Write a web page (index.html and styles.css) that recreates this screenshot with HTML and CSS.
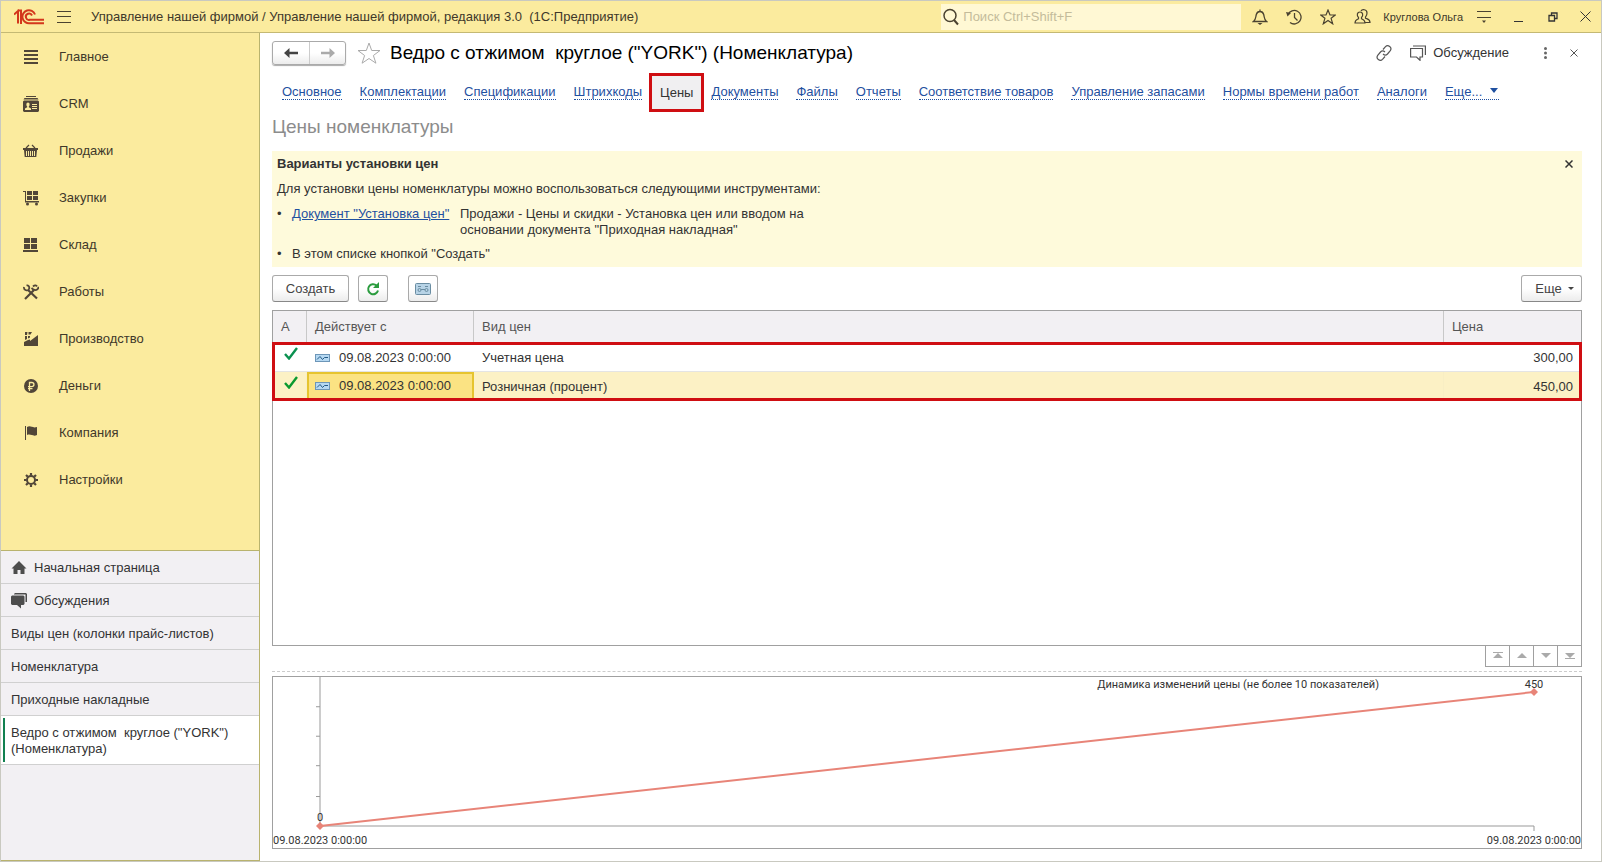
FILE: index.html
```html
<!DOCTYPE html>
<html lang="ru">
<head>
    <meta charset="UTF-8">
    <meta name="viewport" content="width=device-width, initial-scale=1.0">
    <title>Управление нашей фирмой</title>
    <link rel="stylesheet" href="styles.css">
</head>
<body>
    <header class="topbar">
        <svg class="logo" width="30" height="16" viewBox="0 0 30 16" fill="none" stroke="#d3371c" stroke-width="2">
            <path d="M0 5.500L4 2v12.500M3.500 1.500h3.500V15"/>
            <path d="M21 5.500A6.500 6.500 0 1 0 16 14.200H30"/>
            <path d="M18 6.500A3.200 3.200 0 1 0 16 10.800H30"/>
        </svg>
        <button class="icon-btn burger" aria-label="Меню">
            <svg width="14" height="12" viewBox="0 0 14 12" stroke="#4a4230"><path d="M0 .5h14M0 5.500h14M0 11.500h14"/></svg>
        </button>
        <span class="app-title">Управление нашей фирмой / Управление нашей фирмой, редакция 3.0&nbsp; (1С:Предприятие)</span>
        <label class="search">
            <svg width="16" height="18" viewBox="0 0 16 18" fill="none" stroke="#4a4230" stroke-width="1.500"><circle cx="7" cy="7.500" r="6"/><path d="M11 12l4 4.500" stroke-width="2"/></svg>
            <input type="search" placeholder="Поиск Ctrl+Shift+F" aria-label="Поиск">
        </label>
        <div class="top-actions">
            <button class="icon-btn" aria-label="Уведомления">
                <svg width="16" height="16" viewBox="0 0 16 16" fill="none" stroke="#4a4230" stroke-width="1.300"><path d="M1.500 12.500c2.500-2 2-4 2.800-7C5 3 6.500 2.500 8 2.500s3 .5 3.700 3c.8 3 .3 5 2.800 7zM8 .5v2"/><path d="M5.500 14h5L8 16z" fill="#4a4230" stroke="none"/></svg>
            </button>
            <button class="icon-btn" aria-label="История">
                <svg width="16" height="16" viewBox="0 0 16 16" fill="none" stroke="#4a4230" stroke-width="1.300"><path d="M2 5.500A6.800 6.800 0 1 1 4 13.500M8.500 4v4.500l3 3"/><path d="M0 3l5 1-3.500 3.500z" fill="#4a4230" stroke="none"/></svg>
            </button>
            <button class="icon-btn" aria-label="Избранное">
                <svg width="16" height="16" viewBox="0 0 16 16" fill="none" stroke="#4a4230" stroke-width="1.200"><path d="M8 1l2 5h5.300l-4.200 3.300 1.600 5.500L8 11.500l-4.700 3.300 1.600-5.500L.7 6H6z"/></svg>
            </button>
            <button class="icon-btn" aria-label="Пользователи">
                <svg width="17" height="16" viewBox="0 0 17 16" fill="none" stroke="#4a4230" stroke-width="1.200"><path d="M1 14c0-3 1-3 3.500-4.200V8.500C2.500 6.500 3 3 6 3s3.500 3.500 1.500 5.500v1.300C10 11 11 11 11 14z"/><path d="M7 2c1-2 6-2 6 2 0 2-.5 3-1.500 4v1.200c2.500 1 4.500 1 4.500 4.300h-5"/></svg>
            </button>
            <span class="user">Круглова Ольга</span>
            <button class="icon-btn" aria-label="Сервис">
                <svg width="14" height="12" viewBox="0 0 14 12" stroke="#4a4230"><path d="M0 .5h14M0 6.500h14"/><path d="M5 9.500h4l-2 2.500z" fill="#4a4230" stroke="none"/></svg>
            </button>
            <button class="icon-btn minimize" aria-label="Свернуть">
                <svg width="10" height="10" viewBox="0 0 10 10" stroke="#333"><path d="M0 9.500h9"/></svg>
            </button>
            <button class="icon-btn" aria-label="Восстановить">
                <svg width="10" height="10" viewBox="0 0 10 10" fill="none" stroke="#333" stroke-width="1.300"><path d="M1 3.500h5.500V9H1zM3.500 3.500V1H9v5.500H6.500"/></svg>
            </button>
            <button class="icon-btn quit" aria-label="Закрыть">
                <svg width="11" height="11" viewBox="0 0 11 11" stroke="#333"><path d="M.5.5l10 10M10.500.5l-10 10"/></svg>
            </button>
        </div>
    </header>

    <div class="workspace">
        <aside class="sidebar">
            <nav class="sections">
                <a href="#">
                    <svg width="16" height="16" viewBox="0 0 16 16" fill="#514638"><path d="M1 1h14v2H1zM1 5h14v2H1zM1 9h14v2H1zM1 13h14v2H1z"/></svg>
                    Главное
                </a>
                <a href="#">
                    <svg width="16" height="16" viewBox="0 0 16 16" fill="#514638"><path d="M3 0h10v1H3zM1.500 2h13l1 1.500H.5z"/><path fill-rule="evenodd" d="M1 4.500h14l1 1V15l-1 1H1l-1-1V5.500zM5 6.500c-2 0-2 3-.8 4v.7L2 12.500V14h6v-1.500l-2.200-1.300v-.7C7 9.500 7 6.500 5 6.500zM9 8v1h5V8zM9 10v1h5v-1zM9 12v1h5v-1z"/></svg>
                    CRM
                </a>
                <a href="#">
                    <svg width="16" height="16" viewBox="0 0 16 16" fill="#514638"><path d="M0 5h15v2H0z"/><path d="M3 5l3-3M12 5L9 2" stroke="#514638" stroke-width="1.200"/><path fill-rule="evenodd" d="M1 7h13l-.7 7H1.700zM3 8v5h1V8zM5 8v5h1V8zM7 8v5h1V8zM9 8v5h1V8zM11 8v5h1V8z"/></svg>
                    Продажи
                </a>
                <a href="#">
                    <svg width="16" height="16" viewBox="0 0 16 16" fill="#514638"><path d="M0 1h3v10h13v1.500H2V2H0zM4 1h5v4H4zM10 1h5v4h-5zM4 6h5v4H4zM10 6h5v4h-5z"/><circle cx="4.500" cy="14" r="1.500"/><circle cx="13.500" cy="14" r="1.500"/></svg>
                    Закупки
                </a>
                <a href="#">
                    <svg width="16" height="16" viewBox="0 0 16 16" fill="#514638"><path d="M1 1h6v5H1zM8 1h6v5H8zM1 7h6v5H1zM8 7h6v5H8zM0 13h15v2H0z"/></svg>
                    Склад
                </a>
                <a href="#">
                    <svg width="16" height="16" viewBox="0 0 16 16" fill="none" stroke="#514638" stroke-width="2.200"><path d="M5 6l9 8.500M2 15l9-9"/><path d="M1 3c-.5 3.500 4 4.500 5 2S5 1 3.500 1.500M10 2.500c2-2 3.500-1 4 0M11 5.500c2 1.500 5-.5 4-2.500M8.500 4l3 2.500" stroke-width="1.800"/></svg>
                    Работы
                </a>
                <a href="#">
                    <svg width="16" height="16" viewBox="0 0 16 16" fill="#514638"><path d="M1 15v-4l4-2 2-.5v1.500L15 4v11zM2 5h2v3l-2 1zM5 5h2v1.500L5 7.500zM2 1h2.500L4 4H2zM5.500 1H9L7.500 3.500h-2z"/></svg>
                    Производство
                </a>
                <a href="#">
                    <svg width="16" height="16" viewBox="0 0 16 16"><circle cx="8" cy="8" r="7" fill="#514638"/><path d="M6.500 13V4.500h2.200c3 0 3 4.200 0 4.200H5M5 10.700h4.500" fill="none" stroke="#fbeb9e" stroke-width="1.300"/></svg>
                    Деньги
                </a>
                <a href="#">
                    <svg width="16" height="16" viewBox="0 0 16 16" fill="#514638"><path d="M2 1h1v14H2zM4 2c4-2 5 1.500 10 0v8c-4 2-6-1.500-10 0z"/></svg>
                    Компания
                </a>
                <a href="#">
                    <svg width="16" height="16" viewBox="0 0 16 16" fill="none" stroke="#514638"><circle cx="8" cy="8" r="4" stroke-width="2"/><path stroke-width="2.200" d="M8 1v2.500M8 12.500V15M1 8h2.500M12.500 8H15M3 3l1.800 1.800M11.200 11.200L13 13M13 3l-1.800 1.800M4.800 11.200L3 13"/></svg>
                    Настройки
                </a>
            </nav>
            <nav class="windows">
                <a href="#">
                    <svg width="16" height="16" viewBox="0 0 16 16" fill="#4d4d4d"><path d="M8 1l7.500 7.500h-2V14H9.500v-4h-3v4H2.500V8.500h-2z"/></svg>
                    Начальная страница
                </a>
                <a href="#">
                    <svg width="16" height="16" viewBox="0 0 16 16" fill="#4d4d4d"><path d="M4 0h11l1 1v8h-1.500V1.500H3V1zM1 2.500h11.500l1 1V11l-1 1H10v3.500L6 12H1l-1-1V3.500z"/></svg>
                    Обсуждения
                </a>
                <a href="#">Виды цен (колонки прайс-листов)</a>
                <a href="#">Номенклатура</a>
                <a href="#">Приходные накладные</a>
                <a href="#" class="active">Ведро с отжимом&nbsp; круглое ("YORK") (Номенклатура)</a>
            </nav>
        </aside>

        <main class="page">
            <div class="page-head">
                <div class="history">
                    <button aria-label="Назад"><svg width="14" height="10" viewBox="0 0 14 10" fill="#444"><path d="M0 5l5.500-5v3.700H14v2.600H5.500V10z"/></svg></button>
                    <button aria-label="Вперед"><svg width="14" height="10" viewBox="0 0 14 10" fill="#aaa"><path d="M14 5L8.500 0v3.700H0v2.600h8.500V10z"/></svg></button>
                </div>
                <button class="icon-btn favorite" aria-label="В избранное">
                    <svg width="24" height="22" viewBox="0 0 24 22" fill="none" stroke="#aaa"><path d="M12 1l2.700 7.500H23l-6.600 5 2.500 7.700L12 16.500l-6.900 4.700 2.500-7.700L1 8.500h8.300z"/></svg>
                </button>
                <h1>Ведро с отжимом&nbsp; круглое ("YORK") (Номенклатура)</h1>
                <button class="icon-btn link-btn" aria-label="Ссылка">
                    <svg width="16" height="16" viewBox="0 0 16 16" fill="none" stroke="#555" stroke-width="1.200"><path d="M7 4.500l2.500-2.800c2.500-2.500 7 .8 4.800 4L11.500 9c-1.500 1.500-3 1.300-4.500 0"/><path d="M9 11.500l-2.500 2.800c-2.500 2.500-7-.8-4.800-4L4.500 7C6 5.500 7.500 5.700 9 7"/></svg>
                </button>
                <button class="discuss">
                    <svg width="16" height="16" viewBox="0 0 16 16" fill="none" stroke="#555" stroke-width="1.200"><path d="M.6 3.500h11.900v8.500H10v3.300L6.500 12H.6z"/><path d="M3 1h12.400v9"/></svg>
                    Обсуждение
                </button>
                <button class="icon-btn more-btn" aria-label="Еще">
                    <svg width="3" height="12" viewBox="0 0 3 12" fill="#666"><circle cx="1.500" cy="1.500" r="1.500"/><circle cx="1.500" cy="6" r="1.500"/><circle cx="1.500" cy="10.500" r="1.500"/></svg>
                </button>
                <button class="icon-btn close-btn" aria-label="Закрыть">
                    <svg width="8" height="8" viewBox="0 0 8 8" stroke="#555"><path d="M.5.5l7 7M7.500.5l-7 7"/></svg>
                </button>
            </div>

            <nav class="tabs">
                <a href="#">Основное</a>
                <a href="#">Комплектации</a>
                <a href="#">Спецификации</a>
                <a href="#">Штрихкоды</a>
                <a href="#" class="current">Цены</a>
                <a href="#">Документы</a>
                <a href="#">Файлы</a>
                <a href="#">Отчеты</a>
                <a href="#">Соответствие товаров</a>
                <a href="#">Управление запасами</a>
                <a href="#">Нормы времени работ</a>
                <a href="#">Аналоги</a>
                <a href="#">Еще... <svg width="8" height="6" viewBox="0 0 8 6" fill="#1f50a0"><path d="M0 0h8L4 5z"/></svg></a>
            </nav>

            <h2>Цены номенклатуры</h2>

            <section class="hint">
                <div class="hint-head">
                    <h3>Варианты установки цен</h3>
                    <button class="icon-btn" aria-label="Закрыть подсказку">
                        <svg width="8" height="8" viewBox="0 0 8 8" stroke="#333" stroke-width="1.500"><path d="M.5.5l7 7M7.500.5l-7 7"/></svg>
                    </button>
                </div>
                <p>Для установки цены номенклатуры можно воспользоваться следующими инструментами:</p>
                <ul>
                    <li><a href="#">Документ "Установка цен"</a><span>Продажи - Цены и скидки - Установка цен или вводом на<br>основании документа "Приходная накладная"</span></li>
                    <li>В этом списке кнопкой "Создать"</li>
                </ul>
            </section>

            <div class="toolbar">
                <button class="btn create">Создать</button>
                <button class="btn square" aria-label="Обновить">
                    <svg width="14" height="14" viewBox="0 0 14 14" fill="none" stroke="#2b9c3f" stroke-width="2"><path d="M10.500 3.500A5 5 0 1 0 12 8.500"/><path d="M13 0v6H7z" fill="#2b9c3f" stroke="none"/></svg>
                </button>
                <button class="btn square money" aria-label="Цены">
                    <svg width="16" height="12" viewBox="0 0 16 12" fill="none" stroke="#6a8da2"><rect x=".5" y=".5" width="15" height="11" rx="1" fill="#b7d3e6"/><circle cx="4.500" cy="7" r="1.500"/><circle cx="11.500" cy="7" r="1.500"/><path d="M3 3.500h3M10 3.500h3M6 6.500h4"/></svg>
                </button>
                <button class="btn more">Еще <svg width="6" height="4" viewBox="0 0 6 4" fill="#444"><path d="M0 0h6L3 3z"/></svg></button>
            </div>

            <div class="grid">
                <table>
                    <thead>
                        <tr>
                            <th class="col-mark">А</th>
                            <th class="col-date">Действует с</th>
                            <th>Вид цен</th>
                            <th class="col-price">Цена</th>
                        </tr>
                    </thead>
                    <tbody>
                        <tr>
                            <td class="mark"><svg width="14" height="13" viewBox="0 0 14 13" fill="none" stroke="#0a9150" stroke-width="2.400"><path d="M1 7l4 4.500L13 1"/></svg></td>
                            <td><svg class="rec" width="15" height="8" viewBox="0 0 15 8" fill="none"><rect x=".5" y=".5" width="14" height="7" fill="#b5d8f2" stroke="#6d96b8"/><path d="M2 5.500l3-3 2.500 3 2-2H13" stroke="#245a86"/></svg>09.08.2023 0:00:00</td>
                            <td>Учетная цена</td>
                            <td class="num">300,00</td>
                        </tr>
                        <tr class="selected">
                            <td class="mark"><svg width="14" height="13" viewBox="0 0 14 13" fill="none" stroke="#0a9a30" stroke-width="2.400"><path d="M1 7l4 4.500L13 1"/></svg></td>
                            <td class="focus"><svg class="rec" width="15" height="8" viewBox="0 0 15 8" fill="none"><rect x=".5" y=".5" width="14" height="7" fill="#b5d8f2" stroke="#6d96b8"/><path d="M2 5.500l3-3 2.500 3 2-2H13" stroke="#245a86"/></svg>09.08.2023 0:00:00</td>
                            <td>Розничная (процент)</td>
                            <td class="num">450,00</td>
                        </tr>
                    </tbody>
                </table>
            </div>
            <div class="pager">
                <button aria-label="В начало"><svg width="10" height="8" viewBox="0 0 10 8" fill="#aaa"><path d="M0 0h10v1H0zM5 1l5 5H0z"/></svg></button>
                <button aria-label="Вверх"><svg width="10" height="8" viewBox="0 0 10 8" fill="#aaa"><path d="M5 1l5 5H0z"/></svg></button>
                <button aria-label="Вниз"><svg width="10" height="8" viewBox="0 0 10 8" fill="#aaa"><path d="M0 1h10L5 6z"/></svg></button>
                <button aria-label="В конец"><svg width="10" height="8" viewBox="0 0 10 8" fill="#aaa"><path d="M0 1h10L5 6zM0 6h10v1H0z"/></svg></button>
            </div>

            <div class="chart">
                <div class="chart-title">Динамика изменений цены (не более 10 показателей)</div>
                <svg class="plot" width="100%" height="100%">
                    <g stroke="#999">
                        <line x1="0" y1="-15" x2="0" y2="100%"/>
                        <line x1="0" y1="100%" x2="100%" y2="100%"/>
                        <line x1="-4" y1="11%" x2="0" y2="11%"/>
                        <line x1="-4" y1="33%" x2="0" y2="33%"/>
                        <line x1="-4" y1="55%" x2="0" y2="55%"/>
                        <line x1="-4" y1="78%" x2="0" y2="78%"/>
                    </g>
                    <line x1="0" y1="100%" x2="100%" y2="0" stroke="#e88478" stroke-width="2"/>
                    <svg x="0" y="100%" class="point"><path d="M-4 0l4-4 4 4-4 4z"/><text x="0" y="-5" text-anchor="middle">0</text></svg>
                    <svg x="100%" y="0" class="point"><path d="M-4 0l4-4 4 4-4 4z"/><text x="0" y="-4" text-anchor="middle">450</text></svg>
                    <svg x="100%" y="100%" class="point"><line x1="0" y1="0" x2="0" y2="5" stroke="#999"/></svg>
                </svg>
                <div class="axis"><span>09.08.2023 0:00:00</span><span>09.08.2023 0:00:00</span></div>
            </div>
        </main>
    </div>
</body>
</html>
```

FILE: styles.css
```css
* {
    box-sizing: border-box;
    margin: 0;
    padding: 0;
}

body {
    display: flex;
    flex-direction: column;
    height: 100vh;
    border: 1px solid #c9c9c0;
    background: #fff;
    color: #333;
    font: 13px/16px "Liberation Sans", Arial, sans-serif;
}

button, input {
    font: inherit;
    color: inherit;
}

svg {
    flex: none;
}

.icon-btn {
    display: flex;
    align-items: center;
    justify-content: center;
    width: 34px;
    height: 30px;
    border: none;
    background: none;
    cursor: pointer;
}

/* top bar */
.topbar {
    display: flex;
    align-items: center;
    height: 32px;
    flex: none;
    padding-left: 13px;
    border-bottom: 1px solid #c4b974;
    background: #fbeb9e;
    color: #40382a;
}

.burger {
    margin: 0 10px 0 3px;
}

.app-title {
    white-space: nowrap;
}

.search {
    display: flex;
    align-items: center;
    gap: 4px;
    width: 300px;
    height: 26px;
    margin-left: auto;
    padding-left: 2px;
    background: #fff8d4;
}

.search input {
    flex: 1;
    min-width: 0;
    border: none;
    outline: none;
    background: none;
}

.search input::placeholder {
    color: #c4bc9b;
}

.top-actions {
    display: flex;
    align-items: center;
    padding-left: 2px;
}

.user {
    padding: 0 4px;
    font-size: 11px;
    white-space: nowrap;
}

.minimize {
    width: 35px;
}

.quit {
    width: 31px;
}

/* layout */
.workspace {
    display: flex;
    flex: 1;
    min-height: 0;
}

.sidebar {
    display: flex;
    flex-direction: column;
    width: 259px;
    flex: none;
    border-right: 1px solid #b9b36e;
    border-bottom: 1px solid #b9b36e;
    background: #f2f0f3;
}

.sections {
    height: 518px;
    background: #fbeb9e;
    border-bottom: 1px solid #b9b36e;
}

.sections a {
    display: flex;
    align-items: center;
    gap: 20px;
    height: 47px;
    padding-left: 22px;
    color: #40382a;
    text-decoration: none;
}

.windows a {
    display: flex;
    align-items: center;
    gap: 7px;
    padding: 9px 10px 7px;
    border-bottom: 1px solid #d0d0d0;
    color: #333;
    text-decoration: none;
}

.windows .active {
    position: relative;
    background: #fff;
}

.windows .active::before {
    content: "";
    position: absolute;
    top: 2px;
    bottom: 2px;
    left: 2px;
    width: 2px;
    background: #118050;
}

/* page */
.page {
    display: flex;
    flex-direction: column;
    flex: 1;
    min-width: 0;
    padding: 8px 19px 12px 12px;
}

.page-head {
    display: flex;
    align-items: center;
    height: 24px;
}

.history {
    display: flex;
    height: 24px;
    border: 1px solid #aaa;
    border-radius: 3px;
    background: linear-gradient(#fff 50%, #ececec);
    box-shadow: 0 1px 1px #aaa;
}

.history button {
    display: flex;
    align-items: center;
    justify-content: center;
    width: 36px;
    border: none;
    background: none;
}

.history button + button {
    border-left: 1px solid #ccc;
}

.favorite {
    margin-left: 6px;
}

h1 {
    flex: 1;
    padding-left: 4px;
    color: #000;
    font-size: 19px;
    font-weight: normal;
    line-height: 24px;
    white-space: nowrap;
}

.discuss {
    display: flex;
    align-items: center;
    gap: 7px;
    margin: 0 19px 0 9px;
    border: none;
    background: none;
}

.close-btn {
    width: 16px;
    margin-left: 4px;
}

.tabs {
    display: flex;
    align-items: center;
    height: 39px;
    margin-top: 8px;
    padding-left: 1px;
    white-space: nowrap;
}

.tabs a {
    margin: 0 9px;
    border-bottom: 1px dotted #1f50a0;
    color: #1f50a0;
    line-height: 14px;
    text-decoration: none;
}

.tabs svg {
    margin: 0 1px 2px 4px;
}

.tabs .current {
    margin: 0 -2px;
    padding: 10px 8px 9px;
    border: 3px solid #cf0e12;
    background: #f0eff1;
    color: #333;
}

h2 {
    margin-top: 4px;
    color: #8c8c8c;
    font-size: 19px;
    font-weight: normal;
    line-height: 22px;
}

/* hint panel */
.hint {
    margin-top: 13px;
    padding: 0 5px 5px;
    background: #fefadb;
}

.hint-head {
    display: flex;
    align-items: center;
    justify-content: space-between;
    height: 26px;
}

.hint-head .icon-btn {
    width: 16px;
}

h3 {
    font-size: 13px;
}

.hint p {
    padding: 4px 0;
}

.hint ul {
    list-style: none;
}

.hint li {
    display: flex;
    margin: 5px 0 8px;
}

.hint li + li {
    margin-bottom: 0;
}

.hint li::before {
    content: "•";
    width: 15px;
}

.hint li a {
    width: 168px;
    color: #1f50a0;
}

/* commands */
.toolbar {
    display: flex;
    gap: 9px;
    margin-top: 8px;
}

.btn {
    display: flex;
    align-items: center;
    justify-content: center;
    height: 27px;
    border: 1px solid #aaa;
    border-bottom-color: #888;
    border-radius: 3px;
    background: linear-gradient(#fff 50%, #ececec);
    color: #444;
}

.create {
    width: 77px;
}

.square {
    width: 30px;
}

.money {
    margin-left: 11px;
}

.more {
    gap: 6px;
    width: 61px;
    margin-left: auto;
    padding-left: 6px;
}

/* price list */
.grid {
    flex: 1;
    min-height: 0;
    margin-top: 8px;
    border: 1px solid #a0a0a0;
}

table {
    width: 100%;
    border-collapse: separate;
    border-spacing: 0;
    table-layout: fixed;
}

th {
    height: 32px;
    padding: 0 8px;
    border-right: 1px solid #c8c8c8;
    background: #f2f0f3;
    color: #555;
    font-weight: normal;
    text-align: left;
}

th:last-child {
    border-right: none;
}

.col-mark {
    width: 34px;
}

.col-date {
    width: 167px;
}

.col-price {
    width: 137px;
}

tbody {
    outline: 3px solid #cf0e12;
    outline-offset: -2px;
}

td {
    height: 29px;
    padding: 2px 8px 0;
    border-bottom: 1px solid #e4e4e4;
}

.selected td {
    height: 28px;
    border-right: 1px solid #f8eec4;
    border-bottom: none;
    background: #fcf1c5;
}

.selected td:last-child {
    border-right: none;
}

td.mark {
    padding: 0 0 3px 11px;
}

.rec {
    margin-right: 9px;
}

.selected .focus {
    border: 2px solid #e6c42f;
    padding: 0 6px;
    background: #fbe383;
}

.num {
    text-align: right;
}

.pager {
    display: flex;
    justify-content: flex-end;
}

.pager button {
    display: flex;
    align-items: center;
    justify-content: center;
    width: 24px;
    height: 21px;
    border: 1px solid #a0a0a0;
    border-width: 0 1px 1px 0;
    background: #fff;
}

.pager button:first-child {
    width: 25px;
    border-left-width: 1px;
}

/* price chart */
.chart {
    position: relative;
    height: 178px;
    margin-top: 4px;
    padding: 20px 48px 23px 48px;
    border-top: 1px dashed #ccc;
    font-family: Roboto, sans-serif;
    font-size: 11px;
}

.chart::before {
    content: "";
    position: absolute;
    inset: 4px 0 0;
    border: 1px solid #a0a0a0;
}

.chart-title {
    position: absolute;
    top: 5px;
    right: 203px;
}

.plot {
    display: block;
    overflow: visible;
}

.point {
    overflow: visible;
    fill: #e88478;
}

.point text {
    fill: #333;
}

.axis {
    position: absolute;
    right: 1px;
    bottom: 0;
    left: 1px;
    display: flex;
    justify-content: space-between;
}
```
